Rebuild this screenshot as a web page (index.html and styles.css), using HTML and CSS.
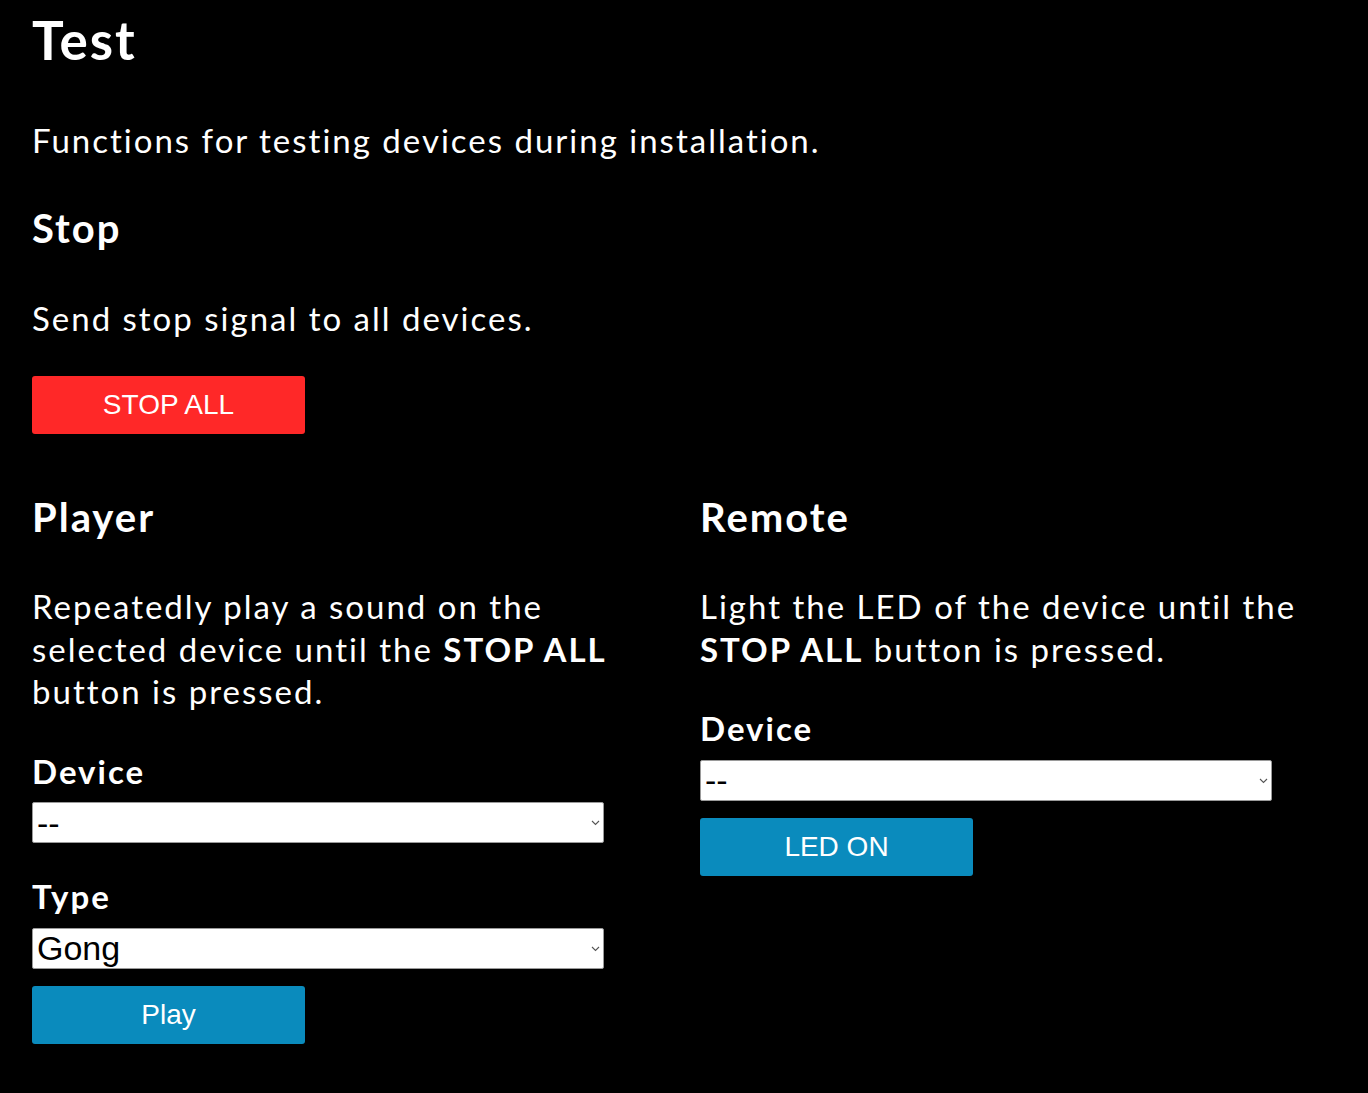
FILE: index.html
```html
<!DOCTYPE html>
<html lang="en">
<head>
<meta charset="utf-8">
<title>Test</title>
<link rel="stylesheet" href="styles.css">
</head>
<body>
<main class="page">
  <h1 class="title">Test</h1>
  <p class="text intro">Functions for testing devices during installation.</p>

  <section class="stop">
    <h2 class="heading">Stop</h2>
    <p class="text stop-text">Send stop signal to all devices.</p>
    <button class="btn btn-red" type="button">STOP ALL</button>
  </section>

  <div class="columns">
    <section class="col">
      <h2 class="heading">Player</h2>
      <p class="text col-text">Repeatedly play a sound on the selected device until the <strong>STOP ALL</strong> button is pressed.</p>
      <label class="label" for="player-device">Device</label>
      <div class="select-wrap">
        <select class="select" id="player-device">
          <option>--</option>
        </select>
        <svg class="chevron" width="9" height="6" viewBox="0 0 9 6" aria-hidden="true"><path d="M1 1 L4.5 4.5 L8 1" fill="none" stroke="#555" stroke-width="1.1"/></svg>
      </div>
      <label class="label label-type" for="player-type">Type</label>
      <div class="select-wrap">
        <select class="select" id="player-type">
          <option>Gong</option>
        </select>
        <svg class="chevron" width="9" height="6" viewBox="0 0 9 6" aria-hidden="true"><path d="M1 1 L4.5 4.5 L8 1" fill="none" stroke="#555" stroke-width="1.1"/></svg>
      </div>
      <button class="btn btn-blue" type="button">Play</button>
    </section>

    <section class="col">
      <h2 class="heading">Remote</h2>
      <p class="text col-text">Light the LED of the device until the <strong>STOP ALL</strong> button is pressed.</p>
      <label class="label" for="remote-device">Device</label>
      <div class="select-wrap">
        <select class="select" id="remote-device">
          <option>--</option>
        </select>
        <svg class="chevron" width="9" height="6" viewBox="0 0 9 6" aria-hidden="true"><path d="M1 1 L4.5 4.5 L8 1" fill="none" stroke="#555" stroke-width="1.1"/></svg>
      </div>
      <button class="btn btn-blue" type="button">LED ON</button>
    </section>
  </div>
</main>
</body>
</html>
```

FILE: styles.css
```css
html, body {
  margin: 0;
  padding: 0;
  background: #000;
}

body {
  color: #fff;
  font-family: Lato, "DejaVu Sans", sans-serif;
  letter-spacing: 2px;
}

.page {
  padding: 8px 32px 0 32px;
}

.title {
  margin: 0;
  font-size: 53px;
  line-height: 64px;
  font-weight: 700;
}

.text {
  margin: 0;
  font-size: 33px;
  line-height: 42.5px;
}

.text strong {
  font-weight: 700;
}

.intro {
  margin-top: 47px;
}

.heading {
  margin: 0;
  font-size: 40px;
  line-height: 46px;
  font-weight: 700;
}

.stop {
  margin-top: 43px;
}

.stop-text {
  margin-top: 46px;
}

.btn {
  display: block;
  width: 273px;
  height: 58px;
  border: 0;
  border-radius: 3px;
  color: #fff;
  font-family: "Liberation Sans", Arial, sans-serif;
  font-size: 28px;
  letter-spacing: 0;
  padding: 0;
  cursor: pointer;
}

.stop .btn {
  margin-top: 37px;
}

.btn-red {
  background: #ff2828;
}

.btn-blue {
  background: #0a8bbd;
  margin-top: 17px;
}

.columns {
  display: grid;
  grid-template-columns: 1fr 1fr;
  column-gap: 32px;
  margin-top: 60px;
}

.col {
  display: flex;
  flex-direction: column;
  align-items: flex-start;
}

.col-text {
  margin-top: 45px;
}

.label {
  display: block;
  margin-top: 37px;
  font-size: 33px;
  line-height: 42.5px;
  font-weight: 700;
}

.label-type {
  margin-top: 32px;
}

.select-wrap {
  position: relative;
  width: 90%;
  margin-top: 10px;
}

.select {
  display: block;
  width: 100%;
  height: 41px;
  margin: 0;
  background: #fff;
  color: #000;
  border: 1px solid #9a9a9a;
  border-radius: 2px;
  font-family: "Liberation Sans", Arial, sans-serif;
  font-size: 34px;
  letter-spacing: 0;
  padding: 0 4px;
  -webkit-appearance: none;
  appearance: none;
}

.chevron {
  position: absolute;
  right: 4px;
  top: 18px;
  pointer-events: none;
}
```
